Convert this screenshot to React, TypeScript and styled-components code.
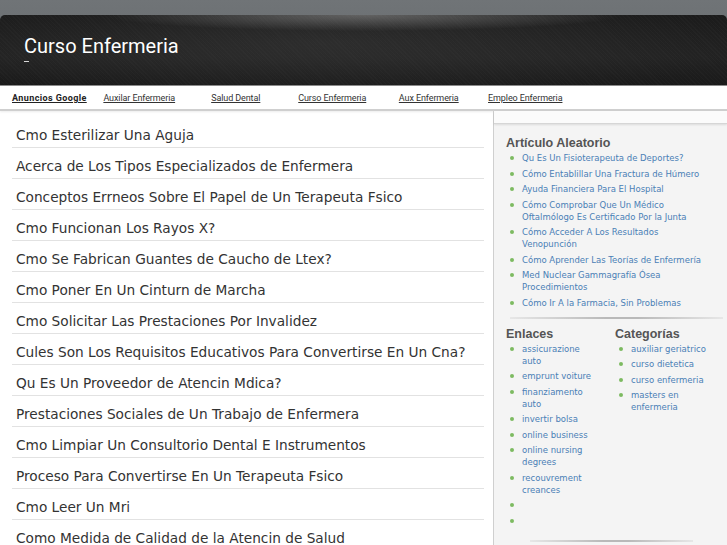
import React from "react";
import styled, { createGlobalStyle } from "styled-components";

const GlobalStyle = createGlobalStyle`
  html, body {
    margin: 0;
    padding: 0;
    background: #ffffff;
  }
  body {
    font-family: "DejaVu Sans", Verdana, sans-serif;
  }
`;

const Page = styled.div`
  width: 727px;
  height: 545px;
  overflow: hidden;
  background: #ffffff;
`;

const TopBand = styled.div`
  background: linear-gradient(#707477, #65696c);
  padding-top: 15px;
`;

const HeaderBlock = styled.header`
  height: 70px;
  box-sizing: border-box;
  padding: 19px 0 0 24px;
  border-radius: 5px 5px 0 0;
  background:
    radial-gradient(ellipse 260px 16px at 50% 0, rgba(150, 150, 150, 0.55), rgba(150, 150, 150, 0) 100%),
    radial-gradient(ellipse 420px 60px at 45% 40%, rgba(70, 70, 70, 0.35), rgba(0, 0, 0, 0) 100%),
    repeating-linear-gradient(45deg, rgba(255, 255, 255, 0.02) 0 1px, rgba(0, 0, 0, 0) 1px 3px),
    linear-gradient(#1b1b1b, #222222 60%, #1a1a1a);
  .header-title {
    margin: 0;
    font-family: Roboto, "Liberation Sans", sans-serif;
    font-weight: 400;
    font-size: 20px;
    line-height: 24px;
    color: #ffffff;
  }
  .header-dash {
    width: 5px;
    height: 1px;
    margin-top: 3px;
    background: #d8d8d8;
  }
`;

const Nav = styled.nav`
  display: flex;
  align-items: center;
  height: 23px;
  padding-left: 12px;
  border-top: 1px solid #8a8a8a;
  border-bottom: 2px solid #cfcfcf;
  box-shadow: 0 1px 2px rgba(0, 0, 0, 0.08);
  background: #ffffff;
  font-family: Roboto, "Liberation Sans", sans-serif;
  font-size: 9px;
  .nav-lead {
    width: 79px;
    font-weight: 700;
    color: #222222;
    text-decoration: underline;
    letter-spacing: 0.4px;
  }
`;

const NavLink = styled.a`
  width: 96.5px;
  text-align: center;
  color: #333333;
  text-decoration: underline;
  letter-spacing: -0.1px;
`;

const Body = styled.div`
  display: flex;
  align-items: stretch;
`;

const Main = styled.main`
  width: 493px;
  box-sizing: border-box;
  padding: 6px 9px 0 12px;
`;

const Row = styled.div`
  padding: 10px 0 4px 4px;
  border-bottom: 1px solid #e2e2e2;
  font-size: 13.7px;
  line-height: 16px;
  color: #333333;
  white-space: nowrap;
`;

const Sidebar = styled.aside`
  flex: 1;
  border-left: 1px solid #cfcfcf;
  background: #f4f4f4;
  min-height: 440px;
`;

const SidebarTop = styled.div`
  height: 12px;
  background: #fbfbfb;
  border-bottom: 1px solid #d6d6d6;
  box-shadow: 0 1px 2px rgba(0, 0, 0, 0.1);
`;

const SidebarInner = styled.div`
  padding: 11px 0 0 12px;
`;

const Heading = styled.h3`
  margin: 0 0 1px;
  font-family: "Liberation Sans", Arial, sans-serif;
  font-size: 12.5px;
  line-height: 16px;
  font-weight: 700;
  color: #555555;
`;

const List = styled.ul<{ $width: number }>`
  list-style: none;
  margin: 0;
  padding: 0;
  width: ${(p) => p.$width}px;
`;

const Item = styled.li`
  position: relative;
  min-height: 12px;
  padding-left: 16px;
  margin-bottom: 3.5px;
  font-size: 8.5px;
  line-height: 12px;
  color: #4a80b6;
  &::before {
    content: "";
    position: absolute;
    left: 4px;
    top: 4px;
    width: 4px;
    height: 4px;
    border-radius: 50%;
    background: #7dba61;
  }
`;

const Divider = styled.div<{ $from: number; $to: number }>`
  height: 2px;
  margin: 0 ${(p) => p.$to}px 0 ${(p) => p.$from}px;
  background: linear-gradient(90deg, rgba(200, 200, 200, 0.3), #b9b9b9 45%, #b9b9b9 60%, rgba(200, 200, 200, 0.3));
`;

const Columns = styled.div`
  display: flex;
  padding: 7px 0 0 12px;
`;

const Column = styled.div<{ $width: number }>`
  width: ${(p) => p.$width}px;
`;

const articles = [
  "Cmo Esterilizar Una Aguja",
  "Acerca de Los Tipos Especializados de Enfermera",
  "Conceptos Errneos Sobre El Papel de Un Terapeuta Fsico",
  "Cmo Funcionan Los Rayos X?",
  "Cmo Se Fabrican Guantes de Caucho de Ltex?",
  "Cmo Poner En Un Cinturn de Marcha",
  "Cmo Solicitar Las Prestaciones Por Invalidez",
  "Cules Son Los Requisitos Educativos Para Convertirse En Un Cna?",
  "Qu Es Un Proveedor de Atencin Mdica?",
  "Prestaciones Sociales de Un Trabajo de Enfermera",
  "Cmo Limpiar Un Consultorio Dental E Instrumentos",
  "Proceso Para Convertirse En Un Terapeuta Fsico",
  "Cmo Leer Un Mri",
  "Como Medida de Calidad de la Atencin de Salud",
];

const random = [
  "Qu Es Un Fisioterapeuta de Deportes?",
  "Cómo Entablillar Una Fractura de Húmero",
  "Ayuda Financiera Para El Hospital",
  "Cómo Comprobar Que Un Médico Oftalmólogo Es Certificado Por la Junta",
  "Cómo Acceder A Los Resultados Venopunción",
  "Cómo Aprender Las Teorías de Enfermería",
  "Med Nuclear Gammagrafía Ósea Procedimientos",
  "Cómo Ir A la Farmacia, Sin Problemas",
];

const links = [
  "assicurazione auto",
  "emprunt voiture",
  "finanziamento auto",
  "invertir bolsa",
  "online business",
  "online nursing degrees",
  "recouvrement creances",
  "",
  "",
];

const categories = [
  "auxiliar geriatrico",
  "curso dietetica",
  "curso enfermeria",
  "masters en enfermeria",
];

const navLinks = [
  "Auxilar Enfermeria",
  "Salud Dental",
  "Curso Enfermeria",
  "Aux Enfermeria",
  "Empleo Enfermeria",
];

const App: React.FC = () => {
  return (
    <Page>
      <GlobalStyle />
      <TopBand>
        <HeaderBlock>
          <h1 className="header-title">Curso Enfermeria</h1>
          <div className="header-dash" />
        </HeaderBlock>
      </TopBand>
      <Nav>
        <a className="nav-lead">Anuncios Google</a>
        {navLinks.map((l) => (
          <NavLink key={l}>{l}</NavLink>
        ))}
      </Nav>
      <Body>
        <Main>
          {articles.map((a) => (
            <Row key={a}>{a}</Row>
          ))}
        </Main>
        <Sidebar>
          <SidebarTop />
          <SidebarInner>
            <Heading>Artículo Aleatorio</Heading>
            <List $width={200}>
              {random.map((r) => (
                <Item key={r}>{r}</Item>
              ))}
            </List>
          </SidebarInner>
          <Divider $from={16} $to={4} style={{ marginTop: 8 }} />
          <Columns>
            <Column $width={109}>
              <Heading>Enlaces</Heading>
              <List $width={92}>
                {links.map((l, i) => (
                  <Item key={i}>{l}</Item>
                ))}
              </List>
            </Column>
            <Column $width={110}>
              <Heading>Categorías</Heading>
              <List $width={100}>
                {categories.map((c) => (
                  <Item key={c}>{c}</Item>
                ))}
              </List>
            </Column>
          </Columns>
          <Divider $from={36} $to={34} style={{ marginTop: 10 }} />
        </Sidebar>
      </Body>
    </Page>
  );
};

export default App;
